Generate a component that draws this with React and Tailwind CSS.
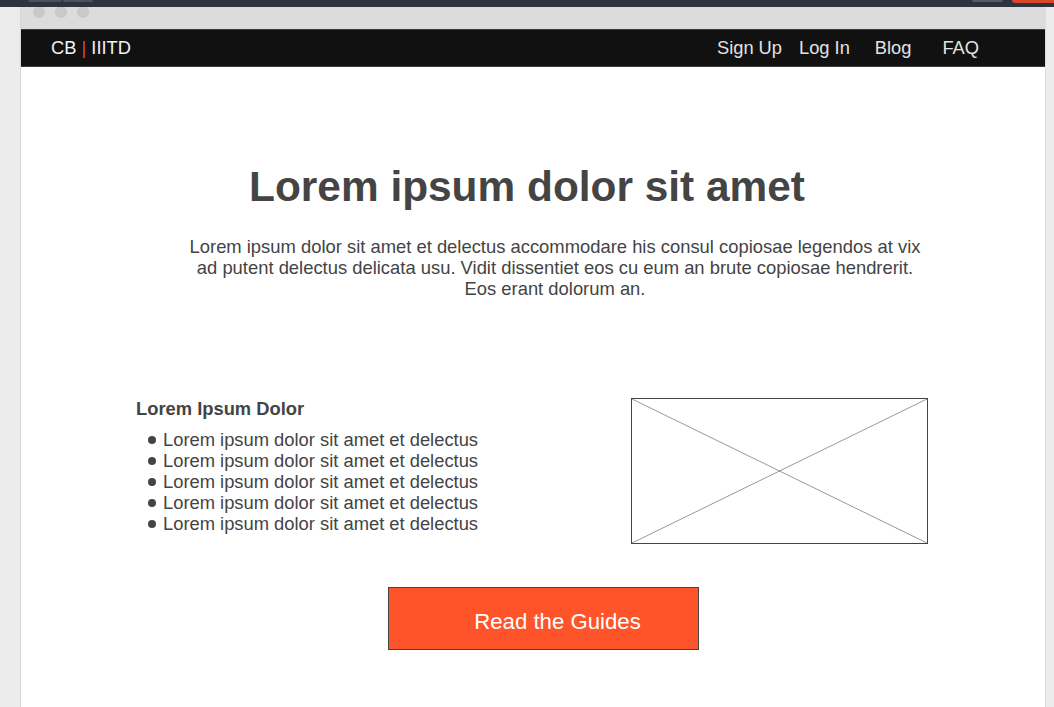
import React from "react";

const items = [1, 2, 3, 4, 5];

const App = () => {
  return (
    <div className="w-full h-[707px] overflow-hidden bg-[#ececec] font-['Liberation_Sans',Arial,sans-serif]">
      {/* browser top strip */}
      <div className="h-[7px] bg-[#2e3341] flex items-start">
        <div className="ml-[28px] w-[34px] h-[2px] bg-[#4c515d] rounded-b-[3px]" />
        <div className="w-[31px] h-[2px] bg-[#4c515d] rounded-b-[3px] border-l border-[#2e3341]" />
        <div className="ml-auto w-[31px] h-[2px] bg-[#555a66] rounded-b-[3px]" />
        <div className="ml-[9px] w-[42px] h-[3px] bg-[#d9472b] rounded-bl-[4px]" />
      </div>

      <div className="flex h-[700px]">
        <div className="w-[20px] bg-[#ececec]" />

        <div className="w-[1025px] border-l border-[#d6d6d6] bg-white flex flex-col">
          {/* window chrome */}
          <div className="h-[22px] bg-[#dcdcdc] overflow-hidden flex gap-[10px] pl-[12px]">
            <span className="mt-[-1px] w-[12px] h-[12px] rounded-full bg-[#c9c9c9]" />
            <span className="mt-[-1px] w-[12px] h-[12px] rounded-full bg-[#c9c9c9]" />
            <span className="mt-[-1px] w-[12px] h-[12px] rounded-full bg-[#c9c9c9]" />
          </div>

          {/* navbar */}
          <nav className="h-[38px] bg-[#111111] border-t border-b border-[#3c3c3c] flex items-center text-[18.3px] leading-[21px] text-[#f2f2f2] pr-[66px]">
            <div className="pl-[30px] mt-[-1px]">
              CB <span className="text-[#e0491f]">|</span> IIITD
            </div>
            <div className="ml-auto mt-[-1px] flex items-center text-[#e2e2e2]">
              <span>Sign Up</span>
              <span className="ml-[17px]">Log In</span>
              <span className="ml-[25px]">Blog</span>
              <span className="ml-[31px]">FAQ</span>
            </div>
          </nav>

          {/* content */}
          <main className="flex flex-col text-[#444444]">
            <h1 className="pt-[96px] pr-[12px] text-center font-bold text-[42.4px] leading-[48px]">
              Lorem ipsum dolor sit amet
            </h1>
            <p className="mt-[25px] ml-[160px] w-[748px] text-center text-[18.4px] leading-[21px]">
              Lorem ipsum dolor sit amet et delectus accommodare his consul copiosae legendos at vix ad
              putent delectus delicata usu. Vidit dissentiet eos cu eum an brute copiosae hendrerit. Eos
              erant dolorum an.
            </p>

            <section className="mt-[99px] ml-[115px] flex">
              <div className="w-[495px] text-[18.35px] leading-[21px]">
                <h3 className="font-bold">Lorem Ipsum Dolor</h3>
                <ul className="mt-[10px]">
                  {items.map((i) => (
                    <li key={i} className="flex items-center">
                      <span className="ml-[12px] mr-[7px] w-[8px] h-[8px] rounded-full bg-[#444444]" />
                      Lorem ipsum dolor sit amet et delectus
                    </li>
                  ))}
                </ul>
              </div>
              <div className="w-[297px] h-[146px] border border-[#444444]">
                <svg className="w-full h-full" viewBox="0 0 295 144" preserveAspectRatio="none">
                  <line x1="0" y1="0" x2="295" y2="144" stroke="#999" strokeWidth="1" />
                  <line x1="295" y1="0" x2="0" y2="144" stroke="#999" strokeWidth="1" />
                </svg>
              </div>
            </section>

            <button className="mt-[43px] ml-[367px] w-[311px] h-[63px] bg-[#ff5329] border border-[#444444] text-white text-[22.2px] pl-[28px] pt-[6px]">
              Read the Guides
            </button>
          </main>
        </div>

        <div className="w-[9px] border-l border-[#dcdcdc] bg-[#ececec]" />
      </div>
    </div>
  );
};

export default App;
